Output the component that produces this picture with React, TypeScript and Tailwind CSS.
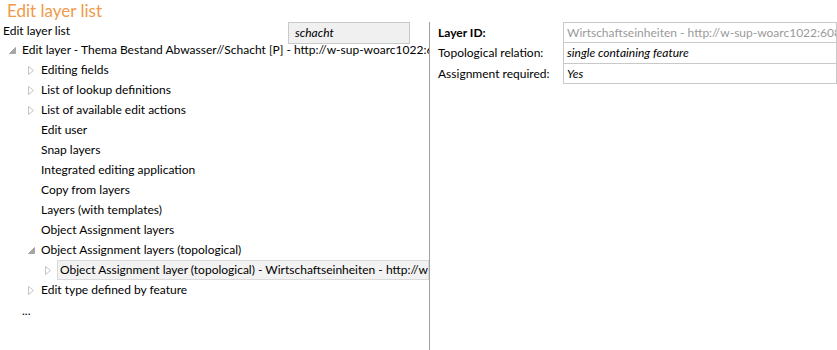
import React from 'react';

const font = { fontFamily: 'Lato, "Open Sans", Arial, sans-serif' };

function Collapsed() {
   return (
      <svg width="6" height="9" viewBox="0 0 6 9" className="block">
         <path d="M0.5 0.5 L5.5 4.5 L0.5 8.5 Z" fill="none" stroke="#c4c4c4" strokeWidth="1" />
      </svg>
   );
}

function Expanded() {
   return (
      <svg width="7" height="7" viewBox="0 0 7 7" className="block">
         <path d="M6.5 0.5 L6.5 6.5 L0.5 6.5 Z" fill="#a6a6a6" stroke="#a6a6a6" strokeWidth="1" />
      </svg>
   );
}

type Node = { label: string; icon?: 'c' | 'e' };

const children: Node[] = [
   { label: 'Editing fields', icon: 'c' },
   { label: 'List of lookup definitions', icon: 'c' },
   { label: 'List of available edit actions', icon: 'c' },
   { label: 'Edit user' },
   { label: 'Snap layers' },
   { label: 'Integrated editing application' },
   { label: 'Copy from layers' },
   { label: 'Layers (with templates)' },
   { label: 'Object Assignment layers' },
   { label: 'Object Assignment layers (topological)', icon: 'e' },
];

function Row({ indent, icon, label }: { indent: number; icon?: 'c' | 'e'; label: string }) {
   return (
      <div className="flex h-5 items-center whitespace-nowrap" style={{ paddingLeft: indent }}>
         <div className="flex w-[14px] shrink-0 items-center justify-start pl-[1px]">
            {icon === 'c' && <Collapsed />}
            {icon === 'e' && <Expanded />}
         </div>
         <span>{label}</span>
      </div>
   );
}

export default function App() {
   return (
      <div className="h-[350px] w-[837px] overflow-hidden bg-white text-[12px] text-black" style={font}>
         <div className="h-[22px] pl-[7px] text-[17px] leading-[22px] text-[#f09a4a]">Edit layer list</div>

         <div className="flex">
            {/* left: tree */}
            <div className="w-[429px] shrink-0 overflow-hidden">
               <div className="flex h-[18px] items-start">
                  <span className="pl-[3px] pt-[1px] leading-[16px]">Edit layer list</span>
                  <div className="relative z-10 ml-auto mr-[19px] h-[22px] w-[122px] shrink-0 border border-[#c9c9c9] bg-[#f0f0f0] pl-[6px] italic leading-[20px]">
                     schacht
                  </div>
               </div>

               <Row indent={8} icon="e" label="Edit layer - Thema Bestand Abwasser//Schacht [P] - http://w-sup-woarc1022:6080/arcgis" />
               {children.map((c) => (
                  <Row key={c.label} indent={27} icon={c.icon} label={c.label} />
               ))}
               <div className="flex h-5 items-center whitespace-nowrap pl-[45px]">
                  <div className="flex w-[12px] shrink-0 items-center">
                     <Collapsed />
                  </div>
                  <div className="flex h-5 min-w-0 flex-1 items-center overflow-hidden border border-[#dadada] bg-[#f2f2f2] pl-[2px]">
                     Object Assignment layer (topological) - Wirtschaftseinheiten - http://w-sup-woarc1022:6080
                  </div>
               </div>
               <Row indent={27} icon="c" label="Edit type defined by feature" />
               <div className="h-5 pl-[22px] leading-[22px]">...</div>
            </div>

            {/* divider */}
            <div className="h-[328px] w-px shrink-0 bg-[#a0a0a0]" />

            {/* right: properties */}
            <div className="min-w-0 flex-1 overflow-hidden pl-2">
               <div className="grid grid-cols-[125px_1fr]">
                  <div className="flex h-[21px] items-center font-bold">Layer ID:</div>
                  <div className="flex h-[21px] items-center overflow-hidden whitespace-nowrap border border-[#c9c9c9] pl-[3px] text-[#9a9a9a]">
                     Wirtschaftseinheiten - http://w-sup-woarc1022:6080/arcgis/rest/services
                  </div>
                  <div className="flex h-[20px] items-center whitespace-nowrap">Topological relation:</div>
                  <div className="flex h-[20px] items-center whitespace-nowrap border-x border-[#c9c9c9] pl-[3px] italic">
                     single containing feature
                  </div>
                  <div className="flex h-[21px] items-center whitespace-nowrap">Assignment required:</div>
                  <div className="flex h-[21px] items-center border border-[#c9c9c9] pl-[3px] italic">Yes</div>
               </div>
            </div>
         </div>
      </div>
   );
}
